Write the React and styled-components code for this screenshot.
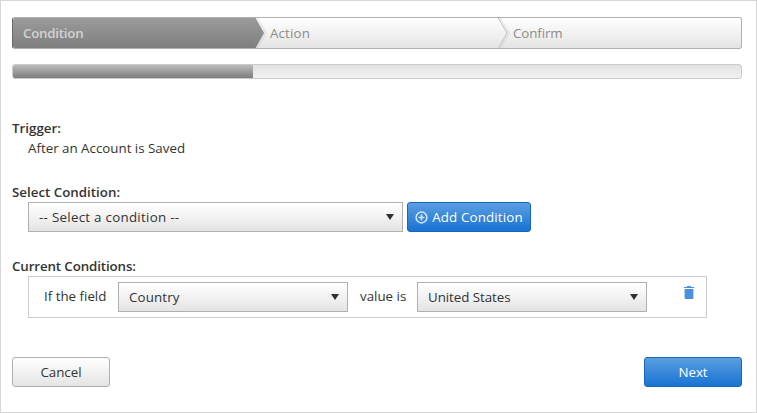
import * as React from 'react';
import styled, { createGlobalStyle, css } from 'styled-components';

const GlobalStyle = createGlobalStyle`
  * {
    box-sizing: border-box;
  }
  body {
    margin: 0;
    background: #fff;
    color: #333;
    font: 13.33px/20px 'Open Sans', 'Noto Sans', sans-serif;
  }
`;

const Page = styled.div`
  width: 757px;
  height: 413px;
  padding: 16px 14px 0 11px;
  border: 1px solid #d6d6d6;
  overflow: hidden;
`;

const Steps = styled.div`
  display: flex;
  height: 32px;
  border: 1px solid #b0b0b0;
  border-radius: 3px;
  overflow: hidden;
  border-left-color: #686868;
  background: linear-gradient(#fff, #e4e4e4);
`;

const Step = styled.div`
  position: relative;
  flex: 0 0 ${({ $width }) => $width}px;
  height: 32px;
  margin-top: -1px;
  padding-left: ${({ $indent }) => $indent}px;
  line-height: 32px;
  letter-spacing: ${({ $tracking }) => $tracking || 0}px;
  color: #8b8b8b;

  ${({ $active }) =>
    $active &&
    css`
      color: #d2d2d2;
      font-weight: 600;
      background: linear-gradient(#9b9b9b, #7f7f7f);
      border-top: 1px solid #686868;
      border-bottom: 1px solid #686868;
      line-height: 30px;
      z-index: 1;
    `}
`;

const Arrow = styled.svg`
  position: absolute;
  left: 100%;
  top: ${({ $top }) => $top}px;
  width: 14px;
  height: 32px;
`;

const Progress = styled.div`
  height: 15px;
  margin-top: 15px;
  border: 1px solid #cbcbcb;
  border-radius: 3px;
  overflow: hidden;
  background: linear-gradient(#e2e2e2, #f1f1f1);
`;

const ProgressFill = styled.div`
  height: 100%;
  background: linear-gradient(#bcbcbc, #7d7d7d);
`;

const Section = styled.section`
  margin-top: ${({ $gap }) => $gap}px;
`;

const Label = styled.div`
  height: 20px;
  font-weight: 600;
  letter-spacing: ${({ $tracking }) => $tracking || 0}px;
  white-space: nowrap;
`;

const Text = styled.span`
  letter-spacing: ${({ $tracking }) => $tracking || 0}px;
  white-space: nowrap;
`;

const Indent = styled.div`
  display: flex;
  gap: 4px;
  margin-left: 16px;
`;

const SelectBox = styled.div`
  display: flex;
  align-items: center;
  justify-content: space-between;
  width: ${({ $width }) => $width}px;
  height: 30px;
  padding: 0 8px 0 10px;
  border: 1px solid #b0b0b0;
  background: linear-gradient(#fff, #e4e4e4);
`;

const Button = styled.button`
  display: flex;
  align-items: center;
  justify-content: center;
  gap: 4px;
  width: ${({ $width }) => $width || 98}px;
  height: 30px;
  padding: 0;
  border: 1px solid #b0b0b0;
  border-radius: 3px;
  background: linear-gradient(#fff, #e4e4e4);
  color: #333;
  font: inherit;

  ${({ $primary }) =>
    $primary &&
    css`
      border-color: #1767b8;
      background: linear-gradient(#5b9ee1, #1873d3);
      color: #fff;
    `}
`;

const ConditionRow = styled.div`
  display: flex;
  align-items: center;
  width: 679px;
  height: 42px;
  margin-left: 16px;
  padding: 0 11px 0 15px;
  border: 1px solid #ccc;
`;

const FieldText = styled.div`
  width: ${({ $width }) => $width}px;
  padding: 0 0 2px ${({ $indent }) => $indent || 0}px;
  white-space: nowrap;
`;

const TrashIcon = styled.svg`
  width: 10px;
  height: 13px;
  margin: -9px 0 0 37px;
`;

const Footer = styled.div`
  display: flex;
  justify-content: space-between;
  margin-top: 39px;
`;

function Select({ width, tracking, children }) {
  return (
    <SelectBox $width={width}>
      <Text $tracking={tracking}>{children}</Text>
      <svg width="8" height="6" viewBox="0 0 8 6">
        <path d="M0 0h8L4 6z" fill="#2f2f2f" />
      </svg>
    </SelectBox>
  );
}

export default function App() {
  return (
    <>
      <GlobalStyle />
      <Page>
        <Steps>
          <Step $width={242} $indent={10} $active $tracking={-0.25}>
            Condition
            <Arrow $top={-1} viewBox="0 0 14 32">
              <defs>
                <linearGradient id="activeStep" x1="0" y1="0" x2="0" y2="1">
                  <stop offset="0" stopColor="#9b9b9b" />
                  <stop offset="1" stopColor="#7f7f7f" />
                </linearGradient>
              </defs>
              <path d="M1 1l9 15-9 15" fill="none" stroke="#000" strokeOpacity=".05" strokeWidth="4" />
              <path d="M0 0l9 16-9 16z" fill="url(#activeStep)" />
            </Arrow>
          </Step>
          <Step $width={243} $indent={15} $tracking={0.15}>
            Action
            <Arrow $top={0} viewBox="0 0 14 32">
              <path d="M1.5 1l9 15-9 15" fill="none" stroke="#000" strokeOpacity=".05" strokeWidth="3" />
              <path d="M-.5 0l9 16-9 16" fill="none" stroke="#fff" strokeWidth="1" />
              <path d="M.3 1l8.5 15-8.5 15" fill="none" stroke="#bbb" strokeWidth=".9" />
            </Arrow>
          </Step>
          <Step $width={243} $indent={15} $tracking={-0.1}>
            Confirm
          </Step>
        </Steps>
        <Progress>
          <ProgressFill style={{ width: 240 }} />
        </Progress>

        <Section $gap={39}>
          <Label>Trigger:</Label>
          <Indent>
            <Text>After an Account is Saved</Text>
          </Indent>
        </Section>

        <Section $gap={24}>
          <Label>Select Condition:</Label>
          <Indent>
            <Select width={375} tracking={0.28}>-- Select a condition --</Select>
            <Button $primary $width={124}>
              <svg width="13" height="13" viewBox="0 0 13 13" fill="none" stroke="#d5e6f7">
                <circle cx="6.5" cy="6.5" r="5.4" strokeWidth="1.5" />
                <path d="M6.5 3.5v6M3.5 6.5h6" strokeWidth="1.6" />
              </svg>
              <Text $tracking={0.15}>Add Condition</Text>
            </Button>
          </Indent>
        </Section>

        <Section $gap={24}>
          <Label $tracking={-0.12}>Current Conditions:</Label>
          <ConditionRow>
            <FieldText $width={74}>If the field</FieldText>
            <Select width={230} tracking={0.15}>Country</Select>
            <FieldText $width={69} $indent={12}>value is</FieldText>
            <Select width={230} tracking={-0.05}>United States</Select>
            <TrashIcon viewBox="0 0 10 13">
              <path d="M0 1h2.5l1-1h3l1 1H10v1H0zM.6 3h8.8v9q0 1-1 1H1.6q-1 0-1-1z" fill="#4a90dc" />
            </TrashIcon>
          </ConditionRow>
        </Section>

        <Footer>
          <Button>Cancel</Button>
          <Button $primary>Next</Button>
        </Footer>
      </Page>
    </>
  );
}
